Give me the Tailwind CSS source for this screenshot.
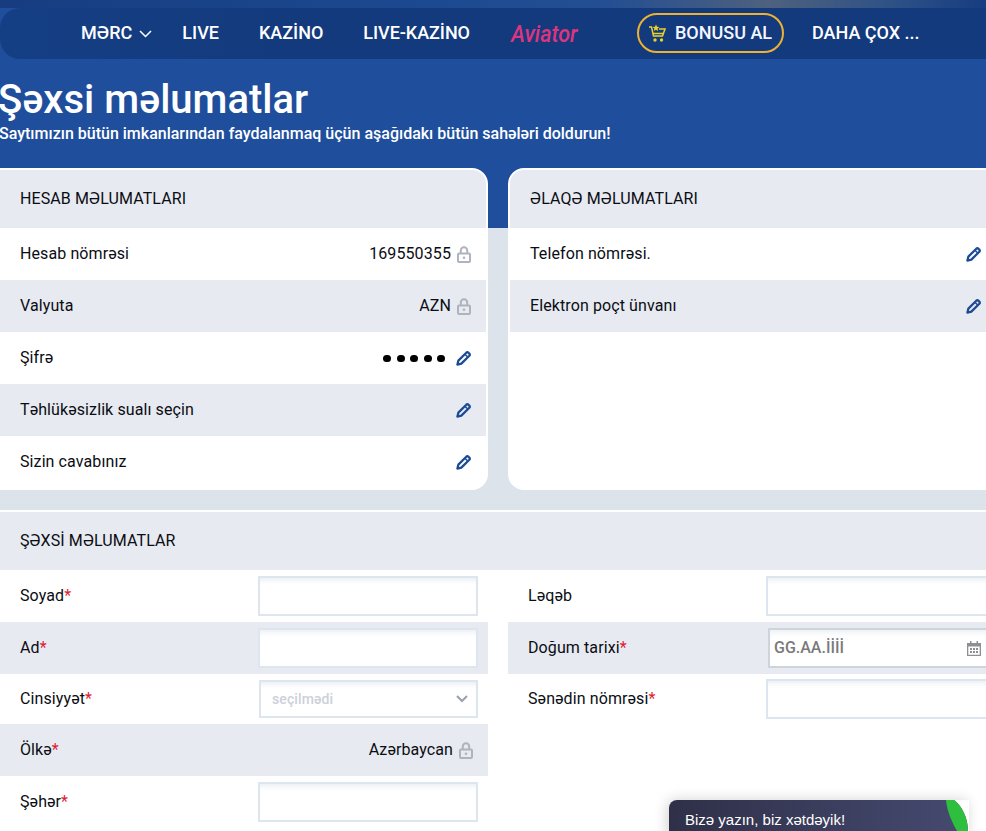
<!DOCTYPE html>
<html lang="az">
<head>
  <meta charset="UTF-8">
  <meta name="viewport" content="width=device-width, initial-scale=1.0">
  <title>Şəxsi məlumatlar</title>
  <script src="https://cdn.jsdelivr.net/npm/@tailwindcss/browser@4"></script>
</head>
<body class="h-[831px] overflow-hidden bg-[#dde3ea] font-['Roboto',sans-serif] text-[#0b0d14]">
  <svg class="hidden">
    <symbol id="lock" viewBox="0 0 14 17"><g fill="none" stroke="#aeb3bd" stroke-width="2"><path d="M3.800 7.500V4.500a3.200 3.200 0 0 1 6.400 0v3"/><rect x="1" y="7.500" width="12" height="8.500" rx="1"/></g><circle cx="7" cy="11.800" r="1.300" fill="#aeb3bd"/></symbol>
    <symbol id="pen" viewBox="0 0 16 16"><g fill="none" stroke="#1c4b94" stroke-width="2.400" stroke-linejoin="round"><path d="M1.500 14.500l1-4.200L11 1.800a1.600 1.600 0 0 1 2.200 0l1 1a1.600 1.600 0 0 1 0 2.200L5.700 13.500z"/><path d="M9.500 3.500l3 3" stroke-width="1.500"/></g></symbol>
  </svg>

  <div class="relative h-[831px] overflow-hidden bg-[linear-gradient(#1f4f9c_228px,#dde3ea_228px)]">
    <!-- top strip -->
    <div class="h-2 bg-[linear-gradient(90deg,#173d80_0%,#1c4a92_45%,#244f92_62%,#4f617e_78%,#2f5286_90%,#173d80_100%)]"></div>

    <nav class="flex h-[51px] items-center rounded-l-[20px] bg-[linear-gradient(90deg,#153f85,#133a7c_30%,#133a7c_100%)] pb-px pl-[81px] text-[18px] leading-none font-medium text-white">
      <a class="flex items-center gap-[7px]">MƏRC
        <svg class="mt-0.5 h-[8px] w-[13px]" viewBox="0 0 13 8" fill="none" stroke="#fff" stroke-width="1.500"><path d="M1 1l5.500 5.500L12 1"/></svg>
      </a>
      <a class="ml-[30px]">LIVE</a>
      <a class="ml-[40px]">KAZİNO</a>
      <a class="ml-[40px] tracking-[-0.05px]">LIVE-KAZİNO</a>
      <a class="ml-[41px] mt-0.5 w-[66px] origin-left scale-x-[0.94] text-[23px] font-medium whitespace-nowrap text-[#dc3580] italic">Aviator</a>
      <a class="ml-[60px] flex h-[40px] w-[147px] items-center gap-[9px] rounded-full border-2 border-[#eeb232] pl-[9px] text-[#f3f6ff]">
        <svg class="h-[18px] w-[18px]" viewBox="0 0 18 18" fill="none" stroke="#e9d22b" stroke-width="1.500"><path d="M1 3h2.500l2 9h9L17 5H11"/><path d="M5 9.500h10.500"/><path fill="#e9d22b" stroke="none" d="M8 .5l1 2.300 2.400.2-1.800 1.600.6 2.400L8 5.700 5.800 7l.6-2.400L4.600 3 7 2.800z"/><circle cx="7" cy="16" r="1.700" fill="#e9d22b" stroke="none"/><circle cx="13.500" cy="16" r="1.700" fill="#e9d22b" stroke="none"/></svg>
        BONUSU AL
      </a>
      <a class="ml-[28px]">DAHA ÇOX ...</a>
    </nav>

    <header class="pt-[17px] text-white">
      <h1 class="-ml-[2px] text-[40px] leading-[47px] font-medium">Şəxsi məlumatlar</h1>
      <p class="mt-[1px] -ml-px text-base leading-[19px] font-medium">Saytımızın bütün imkanlarından faydalanmaq üçün aşağıdakı bütün sahələri doldurun!</p>
    </header>

    <main class="mt-[25px] w-[1000px] text-base tracking-[0.1px]">
      <div class="flex gap-5">
        <section class="h-[322px] w-[488px] rounded-tr-[16px] rounded-br-[16px] border-2 border-l-0 border-white bg-white">
          <h2 class="flex h-[58px] items-center rounded-tr-[14px] bg-[#e7eaf0] pl-5 text-base font-normal">HESAB MƏLUMATLARI</h2>
          <div class="flex h-[52px] items-center justify-between pr-[15px] pl-5"><span>Hesab nömrəsi</span><span class="flex items-center gap-[6px]">169550355<svg class="h-[17px] w-[14px]"><use href="#lock"/></svg></span></div>
          <div class="flex h-[52px] items-center justify-between bg-[#e7eaf0] pr-[15px] pl-5"><span>Valyuta</span><span class="flex items-center gap-[6px]">AZN<svg class="h-[17px] w-[14px]"><use href="#lock"/></svg></span></div>
          <div class="flex h-[52px] items-center justify-between pr-[15px] pl-5"><span>Şifrə</span><span class="flex items-center gap-[11px]"><span class="flex gap-[5.500px]"><i class="h-[7px] w-[8px] rounded-full bg-black"></i><i class="h-[7px] w-[8px] rounded-full bg-black"></i><i class="h-[7px] w-[8px] rounded-full bg-black"></i><i class="h-[7px] w-[8px] rounded-full bg-black"></i><i class="h-[7px] w-[8px] rounded-full bg-black"></i></span><svg class="h-[15px] w-[15px]"><use href="#pen"/></svg></span></div>
          <div class="flex h-[52px] items-center justify-between bg-[#e7eaf0] pr-[15px] pl-5"><span>Təhlükəsizlik sualı seçin</span><svg class="h-[15px] w-[15px]"><use href="#pen"/></svg></div>
          <div class="flex h-[52px] items-center justify-between pr-[15px] pl-5"><span>Sizin cavabınız</span><svg class="h-[15px] w-[15px]"><use href="#pen"/></svg></div>
        </section>

        <section class="h-[322px] w-[492px] rounded-l-[16px] rounded-br-[16px] border-2 border-white bg-white">
          <h2 class="flex h-[58px] items-center rounded-tl-[14px] bg-[#e7eaf0] pl-5 text-base font-normal">ƏLAQƏ MƏLUMATLARI</h2>
          <div class="flex h-[52px] items-center pl-5"><span>Telefon nömrəsi.</span><svg class="ml-auto mr-[17px] h-[15px] w-[15px]"><use href="#pen"/></svg></div>
          <div class="flex h-[52px] items-center bg-[#e7eaf0] pl-5"><span>Elektron poçt ünvanı</span><svg class="ml-auto mr-[17px] h-[15px] w-[15px]"><use href="#pen"/></svg></div>
        </section>
      </div>

      <section class="mt-5 h-[322px] rounded-tr-[16px] border-t-2 border-white bg-white">
        <h2 class="flex h-[58px] items-center bg-[#e7eaf0] pl-5 text-base font-normal">ŞƏXSİ MƏLUMATLAR</h2>
        <div class="flex gap-5">
          <div class="w-[488px]">
            <div class="flex h-[52px] items-center justify-between pr-[10px] pl-5"><span>Soyad<b class="font-normal text-[#e0202c]">*</b></span><span class="h-10 w-[220px] border-2 border-[#dde5ee] bg-white shadow-[inset_0_6px_5px_-3px_#eef1f5]"></span></div>
            <div class="flex h-[52px] items-center justify-between bg-[#e7eaf0] pr-[10px] pl-5"><span>Ad<b class="font-normal text-[#e0202c]">*</b></span><span class="h-10 w-[220px] border-2 border-[#dde5ee] bg-white shadow-[inset_0_6px_5px_-3px_#eef1f5]"></span></div>
            <div class="flex h-[50px] items-center justify-between pr-[10px] pl-5"><span>Cinsiyyət<b class="font-normal text-[#e0202c]">*</b></span><span class="flex h-[38px] w-[219px] items-center justify-between border-2 border-[#dde5ee] bg-white pr-2 pl-[11px] text-sm leading-none font-medium text-[#ccd1d9] shadow-[inset_0_6px_5px_-3px_#eef1f5]">seçilmədi<svg class="h-[8px] w-[12px]" viewBox="0 0 12 8" fill="none" stroke="#9aa1ac" stroke-width="2"><path d="M1 1l5 5 5-5"/></svg></span></div>
            <div class="flex h-[52px] items-center justify-between bg-[#e7eaf0] pr-[15px] pl-5"><span>Ölkə<b class="font-normal text-[#e0202c]">*</b></span><span class="flex items-center gap-[6px]">Azərbaycan<svg class="h-[17px] w-[14px]"><use href="#lock"/></svg></span></div>
            <div class="flex h-[52px] items-center justify-between pr-[10px] pl-5"><span>Şəhər<b class="font-normal text-[#e0202c]">*</b></span><span class="h-10 w-[220px] border-2 border-[#dde5ee] bg-white shadow-[inset_0_6px_5px_-3px_#eef1f5]"></span></div>
          </div>
          <div class="w-[492px]">
            <div class="flex h-[52px] items-center pl-5"><span>Ləqəb</span><span class="mr-[12px] ml-auto h-10 w-[222px] border-2 border-[#dde5ee] bg-white shadow-[inset_0_6px_5px_-3px_#eef1f5]"></span></div>
            <div class="flex h-[52px] items-center bg-[#e7eaf0] pl-5"><span>Doğum tarixi<b class="font-normal text-[#e0202c]">*</b></span><span class="mr-[12px] ml-auto flex h-10 w-[220px] items-center justify-between border-2 border-[#ced4dc] bg-white pr-[5px] pl-[4px] text-base font-medium tracking-normal text-[#7a7a7a] shadow-[inset_0_6px_5px_-3px_#eef1f5]">GG.AA.İİİİ
              <svg class="h-[15px] w-[14px]" viewBox="0 0 14 15" fill="#8d8f93"><path d="M3 0h1.500v2h5V0H11v2h3v13H0V2h3V0zM1.300 5.500v8.200h11.400V5.500H1.300z"/><path d="M3 7h2v2H3zM6 7h2v2H6zM9 7h2v2H9zM3 10h2v2H3zM6 10h2v2H6zM9 10h2v2H9z"/></svg>
            </span></div>
            <div class="flex h-[50px] items-center pl-5"><span>Sənədin nömrəsi<b class="font-normal text-[#e0202c]">*</b></span><span class="mr-[12px] ml-auto h-10 w-[222px] border-2 border-[#dde5ee] bg-white shadow-[inset_0_6px_5px_-3px_#eef1f5]"></span></div>
          </div>
        </div>
      </section>
    </main>

    <!-- chat widget -->
    <div class="absolute top-[800px] left-[669px] h-[40px] w-[300px] rounded-tl-lg bg-[linear-gradient(90deg,#2f3048,#454a70)] pt-[11px] pl-4 font-['Liberation_Sans',sans-serif] text-[15px] leading-[18px] text-white shadow-[-2px_0_14px_rgba(0,0,0,0.18)]">
      Bizə yazın, biz xətdəyik!
      <svg class="absolute top-0 left-[276px] h-[31px] w-[24px]" viewBox="0 0 24 31"><path fill="#fff" d="M9 0C17 6 23 18 23 31h1V0z"/><path fill="#2fbf3f" d="M1 0C2 12 8 24 12 31h11C23 18 17 6 9 0z"/></svg>
    </div>
  </div>
</body>
</html>
